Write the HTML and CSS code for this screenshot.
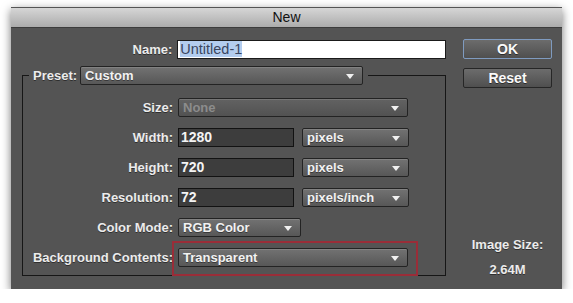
FILE: index.html
```html
<!DOCTYPE html>
<html lang="en">
<head>
    <meta charset="UTF-8">
    <title>New</title>
    <link rel="stylesheet" href="styles.css">
</head>
<body>
    <div class="dialog">
        <div class="titlebar">New</div>
        <div class="dialog-body">
            <div class="main">
                <div class="name-row">
                    <label class="lbl">Name:</label>
                    <div class="name-field"><span class="sel-text">Untitled-1</span></div>
                </div>

                <fieldset class="preset">
                    <legend>
                        <label>Preset:</label>
                        <div class="select preset-select">Custom</div>
                    </legend>

                    <div class="rows">
                        <label class="lbl">Size:</label>
                        <div class="ctl"><div class="select disabled full">None</div></div>

                        <label class="lbl">Width:</label>
                        <div class="ctl">
                            <div class="field">1280</div>
                            <div class="select unit">pixels</div>
                        </div>

                        <label class="lbl">Height:</label>
                        <div class="ctl">
                            <div class="field">720</div>
                            <div class="select unit">pixels</div>
                        </div>

                        <label class="lbl">Resolution:</label>
                        <div class="ctl">
                            <div class="field">72</div>
                            <div class="select unit">pixels/inch</div>
                        </div>

                        <label class="lbl">Color Mode:</label>
                        <div class="ctl"><div class="select mode">RGB Color</div></div>

                        <label class="lbl">Background Contents:</label>
                        <div class="ctl highlight"><div class="select full">Transparent</div></div>
                    </div>
                </fieldset>
            </div>

            <div class="side">
                <button class="btn default">OK</button>
                <button class="btn">Reset</button>
                <div class="image-size">
                    <div>Image Size:</div>
                    <div>2.64M</div>
                </div>
            </div>
        </div>
    </div>
</body>
</html>
```

FILE: styles.css
```css
body {
    margin: 0;
    padding: 7px 0 0 11px;
    background: #ffffff;
    font-family: 'Liberation Sans', Arial, sans-serif;
    font-size: 13px;
}
.dialog {
    width: 551px;
    height: 282px;
    background: #545454;
    box-shadow: 0 3px 9px rgba(0, 0, 0, 0.55);
    display: flex;
    flex-direction: column;
}
.titlebar {
    height: 20px;
    line-height: 21px;
    text-align: center;
    font-size: 14px;
    color: #111;
    background: linear-gradient(#d8d8d8, #acacac);
    border-bottom: 1px solid #3c3c3c;
    box-shadow: inset 0 1px 0 #555;
}
.dialog-body {
    flex: 1;
    display: flex;
    gap: 17px;
    padding: 11px 10px 7px 11px;
}
.main {
    width: 424px;
}
.lbl, legend label {
    color: #ececec;
    font-weight: bold;
    text-shadow: 0 1px 0 rgba(0, 0, 0, 0.45);
    text-align: right;
    line-height: 19px;
}
.name-row {
    display: flex;
    gap: 5px;
    margin-top: 1px;
}
.name-row .lbl {
    width: 151px;
}
.name-field {
    width: 264px;
    height: 17px;
    padding: 0 2px;
    background: #fff;
    border: 1px solid #1a1a1a;
    line-height: 17px;
    font-size: 14.5px;
    color: #3a4660;
}
.sel-text {
    background: #b3cdef;
}
.preset {
    margin: 7px 0 0;
    padding: 13px 0 8px;
    border: 1px solid #161616;
    min-width: 0;
}
.preset legend {
    margin-left: 6px;
    padding: 0 5px 0 4px;
    display: flex;
    gap: 3px;
    background: #545454;
}
.select {
    position: relative;
    height: 17px;
    line-height: 17px;
    padding: 0 20px 0 4px;
    border: 1px solid #232323;
    border-radius: 2px;
    background: linear-gradient(#727272, #575757);
    box-shadow: inset 0 1px 0 rgba(255, 255, 255, 0.12);
    color: #f2f2f2;
    font-weight: bold;
    text-shadow: 0 1px 0 rgba(0, 0, 0, 0.4);
    box-sizing: content-box;
}
.select::after {
    content: '';
    position: absolute;
    right: 8px;
    top: 7px;
    border-left: 4px solid transparent;
    border-right: 4px solid transparent;
    border-top: 5px solid #f0f0f0;
}
.preset-select {
    width: 257px;
}
.select.disabled {
    color: #8c8c8c;
    background: linear-gradient(#626262, #525252);
    text-shadow: none;
}
.rows {
    display: grid;
    grid-template-columns: 150px auto;
    column-gap: 5px;
    row-gap: 11px;
}
.ctl {
    display: flex;
    gap: 8px;
}
.full {
    width: 204px;
}
.unit {
    width: 81px;
}
.mode {
    width: 97px;
}
.field {
    width: 110px;
    height: 17px;
    line-height: 17px;
    padding: 0 2px;
    background: #3d3d3d;
    border: 1px solid #121212;
    color: #f4f4f4;
    font-weight: bold;
    font-size: 14px;
}
.highlight {
    position: relative;
}
.highlight::before {
    content: '';
    position: absolute;
    left: -6px;
    top: -7px;
    width: 242px;
    height: 31px;
    border: 2px solid #9a2d38;
}
.side {
    width: 89px;
    display: flex;
    flex-direction: column;
}
.btn {
    height: 20px;
    margin-bottom: 9px;
    padding: 0;
    border: 1px solid #262626;
    border-radius: 2px;
    background: linear-gradient(#6c6c6c, #4f4f4f);
    color: #fafafa;
    font-family: inherit;
    font-size: 14px;
    font-weight: bold;
    text-shadow: 0 1px 0 rgba(0, 0, 0, 0.5);
}
.btn.default {
    border-color: #7f9bc0;
}
.image-size {
    margin-top: auto;
    text-align: center;
    color: #ececec;
    font-weight: bold;
    line-height: 25px;
    text-shadow: 0 1px 0 rgba(0, 0, 0, 0.45);
}
```
